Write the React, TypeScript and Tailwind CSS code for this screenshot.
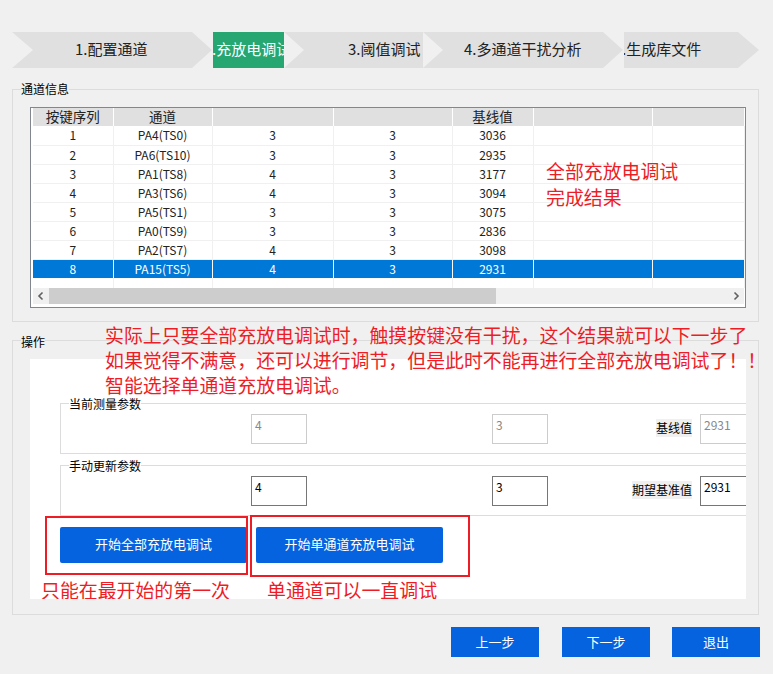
import React from 'react';

const ROWS = [
  ['1', 'PA4(TS0)', '3', '3', '3036'],
  ['2', 'PA6(TS10)', '3', '3', '2935'],
  ['3', 'PA1(TS8)', '4', '3', '3177'],
  ['4', 'PA3(TS6)', '4', '3', '3094'],
  ['5', 'PA5(TS1)', '3', '3', '3075'],
  ['6', 'PA0(TS9)', '3', '3', '2836'],
  ['7', 'PA2(TS7)', '4', '3', '3098'],
  ['8', 'PA15(TS5)', '4', '3', '2931'],
];

const HEADERS = ['按键序列', '通道', '', '', '基线值', '', ''];
const COL_WIDTHS = ['w-[80px]', 'w-[99px]', 'w-[121px]', 'w-[119px]', 'w-[81px]', 'w-[119px]', 'w-[92px]'];

const STEP = 'flex h-9 shrink-0 items-center bg-[#e0e0e0] pb-[2px] text-[15px] text-[#222]';
const LEGEND = 'absolute text-xs leading-none text-black';
const FIELD = 'h-[30px] w-14 shrink-0 border px-[3px] pt-[2px] text-xs leading-4';
const FIELD_OFF = 'border-[#ccc] text-[#888]';
const FIELD_ON = 'border-[#767676] text-black';
const ANNOTATION = 'absolute whitespace-nowrap text-[18.9px] leading-[25px] text-[#ee1c25]';
const BLUE_BTN = 'h-9 w-[187px] rounded-[2px] bg-[#0563e0] pb-[3px] text-[13px] text-white';
const FOOT_BTN = 'h-[30px] w-[88px] bg-[#0563e0] pb-px text-[13px] text-white';

function Param({ title, label, values, on }: { title: string; label: string; values: string[]; on?: boolean }) {
  const state = on ? FIELD_ON : FIELD_OFF;
  return (
    <div className="relative ml-[30px] flex h-[51px] w-[760px] items-start border border-[#dcdcdc] pl-[190px] pt-[10px]">
      <span className={`${LEGEND} -top-[6px] left-2 bg-white`}>{title}</span>
      <div className={`${FIELD} ${state}`}>{values[0]}</div>
      <div className={`${FIELD} ${state} ml-[185px]`}>{values[1]}</div>
      <div className="flex w-[152px] shrink-0 justify-end pr-2 pt-[5px]">
        <span className="bg-[#f0f0f0] text-xs leading-[18px] text-black">{label}</span>
      </div>
      <div className={`${FIELD} ${state} w-[60px]`}>{values[2]}</div>
    </div>
  );
}

export default function App() {
  return (
    <div className="relative h-[674px] w-[773px] overflow-hidden bg-[#f0f0f0] pt-8 font-['Noto_Sans_CJK_SC',sans-serif]">
      {/* wizard steps */}
      <div className="ml-3 flex">
        <div className={`${STEP} w-[200px] pl-[63px] [clip-path:polygon(0_0,180px_0,100%_50%,180px_100%,0_100%,21px_50%)]`}>1.配置通道</div>
        <div className="ml-px flex h-9 w-[71px] shrink-0 items-center justify-start overflow-hidden whitespace-nowrap bg-[#26a671] pb-[2px] text-[15px] text-white">
          <span className="-ml-px">.充放电调试</span>
        </div>
        <div className={`${STEP} w-[139px] pl-[64px] [clip-path:polygon(0_0,100%_0,100%_100%,0_100%,20px_50%)]`}>3.阈值调试</div>
        <div className={`${STEP} w-[200px] pl-[41px] [clip-path:polygon(0_0,180px_0,100%_50%,180px_100%,0_100%,20px_50%)]`}>4.多通道干扰分析</div>
        <div className={`${STEP} ml-px w-[135px] [clip-path:polygon(0_0,114px_0,100%_50%,114px_100%,0_100%)]`}>
          <span className="-ml-[2px]">.生成库文件</span>
        </div>
      </div>

      {/* channel info */}
      <div className="relative ml-3 mt-[21px] h-[233px] w-[747px] border border-[#dcdcdc] pl-[17px] pt-[17px]">
        <span className={`${LEGEND} -top-[7px] left-2 bg-[#f0f0f0]`}>通道信息</span>
        <div className="h-[201px] w-[716px] border border-[#82878f] bg-white pl-[2px] pr-px">
          <table className="w-[711px] table-fixed border-collapse text-center text-xs text-[#222]">
            <thead>
              <tr className="h-[18px] bg-[#e0e0e0] text-[13.5px] leading-[17px]">
                {HEADERS.map((h, i) => (
                  <th key={i} className={`${COL_WIDTHS[i]} border-r border-white p-0 pb-px font-normal`}>{h}</th>
                ))}
              </tr>
            </thead>
            <tbody>
              {ROWS.map((row) => {
                const picked = row[0] === '8';
                return (
                  <tr key={row[0]} className={`h-[19px] ${picked ? 'bg-[#0078d7] text-white' : 'border-b border-[#f0f0f0]'}`}>
                    {[...row, '', ''].map((cell, i) => (
                      <td key={i} className={`border-r p-0 leading-[18px] ${picked ? 'border-white' : 'border-[#f0f0f0]'}`}>{cell}</td>
                    ))}
                  </tr>
                );
              })}
              <tr className="h-[10px]">
                {COL_WIDTHS.map((w) => (
                  <td key={w} className="border-r border-[#f0f0f0] p-0" />
                ))}
              </tr>
            </tbody>
          </table>
          <div className="flex h-4 w-[711px] items-center bg-[#f0f0f0]">
            <svg width="16" height="16" viewBox="0 0 16 16" className="shrink-0" fill="none" stroke="#606060" strokeWidth="1.6">
              <path d="M9.5 4.5 6 8l3.5 3.5" />
            </svg>
            <div className="h-4 w-[447px] bg-[#cdcdcd]" />
            <div className="flex-1" />
            <svg width="16" height="16" viewBox="0 0 16 16" className="shrink-0" fill="none" stroke="#606060" strokeWidth="1.6">
              <path d="M6.5 4.5 10 8l-3.5 3.5" />
            </svg>
          </div>
        </div>
      </div>

      {/* operations */}
      <div className="relative ml-3 mt-[18px] h-[275px] w-[747px] border border-[#dcdcdc] pl-[17px] pt-[18px]">
        <span className={`${LEGEND} -top-[5px] left-2 bg-[#f0f0f0]`}>操作</span>
        <div className="relative h-[240px] w-[716px] overflow-hidden bg-white pt-[44px]">
          <Param title="当前测量参数" label="基线值" values={['4', '3', '2931']} />
          <div className="mt-[11px]">
            <Param title="手动更新参数" label="期望基准值" values={['4', '3', '2931']} on />
          </div>
          <div className="ml-[30px] mt-[11px] flex gap-[9px]">
            <button className={BLUE_BTN}>开始全部充放电调试</button>
            <button className={BLUE_BTN}>开始单通道充放电调试</button>
          </div>
          <span className={`${ANNOTATION} left-[11px] top-[218px]`}>只能在最开始的第一次</span>
          <span className={`${ANNOTATION} left-[237px] top-[218px]`}>单通道可以一直调试</span>
        </div>
      </div>

      {/* footer */}
      <div className="ml-[451px] mt-3 flex">
        <button className={FOOT_BTN}>上一步</button>
        <button className={`${FOOT_BTN} ml-[23px]`}>下一步</button>
        <button className={`${FOOT_BTN} ml-[22px]`}>退出</button>
      </div>

      {/* red notes pasted over the window */}
      <div className={`${ANNOTATION} left-[546px] top-[158px] leading-[26px]`}>
        全部充放电调试
        <br />
        完成结果
      </div>
      <div className={`${ANNOTATION} left-[105px] top-[322px]`}>
        实际上只要全部充放电调试时，触摸按键没有干扰，这个结果就可以下一步了
        <br />
        如果觉得不满意，还可以进行调节，但是此时不能再进行全部充放电调试了！！
        <br />
        智能选择单通道充放电调试。
      </div>
      <div className="absolute left-[45px] top-[516px] h-[59px] w-[203px] border-2 border-[#ee1c25]" />
      <div className="absolute left-[250px] top-[515px] h-[62px] w-[220px] border-2 border-[#ee1c25]" />
    </div>
  );
}
